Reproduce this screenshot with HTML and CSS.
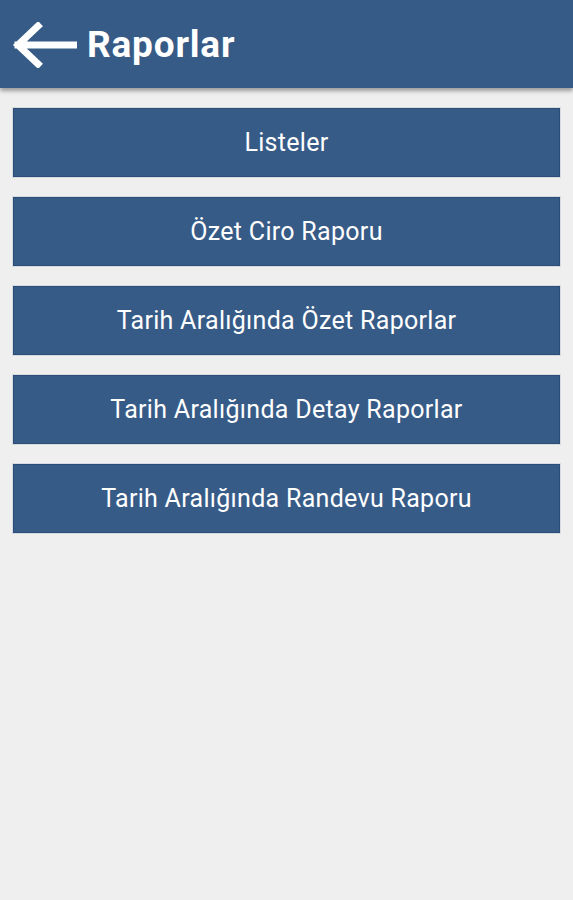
FILE: index.html
```html
<!DOCTYPE html>
<html lang="tr">
<head>
<meta charset="utf-8"/>
<meta name="viewport" content="width=device-width,initial-scale=1.0"/>
    <title>Raporlar</title>
    <link rel="stylesheet" href="styles.css">
</head>
<body>
<header id="top_bar">
    <a class="back" href="#">
        <svg width="66" height="46" viewBox="0 0 66 46">
            <path d="M65 23H7M27 4L7 23l20 19" fill="none" stroke="#fff" stroke-width="7" stroke-linecap="square"/>
        </svg>
    </a>
    <h1>Raporlar</h1>
</header><!-- top_bar -->

<ul id="menu">
    <li><a href="#">Listeler</a></li>
    <li><a href="#">Özet Ciro Raporu</a></li>
    <li><a href="#">Tarih Aralığında Özet Raporlar</a></li>
    <li><a href="#">Tarih Aralığında Detay Raporlar</a></li>
    <li><a href="#">Tarih Aralığında Randevu Raporu</a></li>
</ul><!-- menu -->
</body>
</html>
```
FILE: styles.css
```css
*{margin:0;padding:0;box-sizing:border-box;}
li{list-style:none;}
a{text-decoration:none;color:inherit;}

body{
    min-height:100vh;
    background:#efefef;
    font-family:Roboto,"Noto Sans",sans-serif;}

/*  */
#top_bar{
    display:flex;
    align-items:center;
    gap:10px;
    height:88px;
    padding:1px 0 0 11px;
    background:#375b87;
    box-shadow:0 3px 4px rgba(0,0,0,.35);
    color:#fff;}

.back{display:flex;}

#top_bar h1{
    font-size:37px;font-weight:700;
    letter-spacing:.8px;}

/*  */
#menu{
    display:flex;flex-direction:column;
    gap:20px;
    padding:20px 13px 0 13px;}

#menu li a{
    display:flex;
    justify-content:center;align-items:center;
    height:69px;
    padding:0;
    background:#375b87;
    border:1px solid #2c4d77;
    box-shadow:0 0 0 1px #d6dbe2;
    font-size:25px;color:#fff;
    letter-spacing:.3px;}
```
